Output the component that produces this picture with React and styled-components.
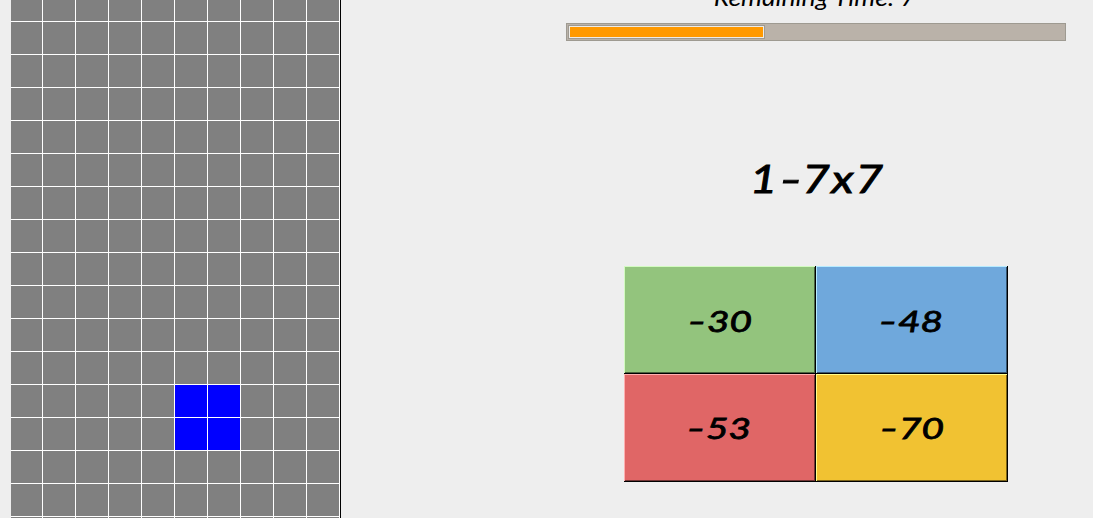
import React from 'react';
import styled, { createGlobalStyle } from 'styled-components';

const GlobalStyle = createGlobalStyle`
  * { box-sizing: border-box; }
  body {
    margin: 0;
    background: #eeeeee;
    color: #000;
    font-family: 'Ink Free', Lato, 'Open Sans', sans-serif;
    overflow: hidden;
  }
`;

const Game = styled.main`
  display: flex;
  width: 1093px;
  height: 518px;
  overflow: hidden;
`;

const Board = styled.section`
  display: grid;
  flex: none;
  margin-left: 11px;
  width: 330px;
  height: 518px;
  grid-template-columns: 32px repeat(9, 33px);
  grid-template-rows: 22px;
  grid-auto-rows: 33px;
  border-right: 1px solid #000;
  overflow: hidden;
`;

const Cell = styled.div`
  background: ${({ $filled }) => ($filled ? '#0000ff' : '#808080')};
  border-right: 1px solid #fff;
  border-bottom: 1px solid #fff;
`;

const Quiz = styled.section`
  display: flex;
  flex-direction: column;
  align-items: center;
  flex: none;
  width: 500px;
  margin-left: 225px;
`;

const Handwriting = styled.span`
  display: inline-block;
  font-style: italic;
  font-weight: 400;
  font-size: ${({ $size }) => $size}px;
  line-height: 1;
  letter-spacing: ${({ $spacing }) => $spacing || 0}px;
  white-space: pre;
  -webkit-text-stroke: ${({ $ink }) => $ink || 0}px #000;
  transform: translate(${({ $x }) => $x || 0}px, ${({ $y }) => $y || 0}px)
    scaleX(${({ $stretch }) => $stretch || 1});
`;

const Dash = styled.span`
  display: inline-block;
  margin: 0 ${({ $after }) => $after}em 0 ${({ $before }) => $before || 0}em;
  transform: scaleX(1.3);
`;

const TimerLabel = styled.div`
  display: flex;
  align-items: flex-end;
  justify-content: center;
  height: 23px;
  margin-top: -12px;
`;

const ProgressTrack = styled.div`
  width: 500px;
  height: 18px;
  margin-top: 12px;
  padding: 1px;
  background: #bab2a9;
  border: 1px solid #9e9a91;
`;

const ProgressBar = styled.div`
  width: 197px;
  height: 14px;
  background: #ff9900;
  border: 1px solid #9e9a91;
  box-shadow: inset 0 0 0 1px #eeebe7;
`;

const Question = styled.div`
  display: flex;
  align-items: center;
  justify-content: center;
  height: 225px;
  padding-top: 50px;
`;

const Answers = styled.div`
  display: grid;
  grid-template-columns: repeat(2, 192px);
  grid-auto-rows: 108px;
`;

const Answer = styled.button`
  display: flex;
  align-items: center;
  justify-content: center;
  padding: 0;
  border: 0;
  color: #000;
  font-family: inherit;
  background: ${({ $face }) => $face};
  box-shadow:
    inset -1px -1px #000,
    inset 1px 1px ${({ $light }) => $light},
    inset -2px -2px ${({ $shade }) => $shade};
`;

const COLUMNS = 10;
const ROWS = 17;
const isFilled = (row, column) =>
  (row === 12 || row === 13) && (column === 5 || column === 6);

const answers = [
  { value: '30', face: '#93c47d', light: '#d3fbc1', shade: '#4b643f', x: 1, y: 0 },
  { value: '48', face: '#6fa8dc', light: '#b6ebff', shade: '#385670', x: 0, y: 0 },
  { value: '53', face: '#e06666', light: '#ffb0b0', shade: '#723434', x: 0, y: -1 },
  { value: '70', face: '#f1c232', light: '#ffff8c', shade: '#7b6319', x: 1, y: -1 },
];

export default function App() {
  return (
    <Game>
      <GlobalStyle />
      <Board>
        {Array.from({ length: COLUMNS * ROWS }, (_, i) => (
          <Cell key={i} $filled={isFilled(Math.floor(i / COLUMNS), i % COLUMNS)} />
        ))}
      </Board>
      <Quiz>
        <TimerLabel>
          <Handwriting $size={23} $stretch={1.15} $x={-1} $y={-2}>Remaining Time: 7</Handwriting>
        </TimerLabel>
        <ProgressTrack>
          <ProgressBar />
        </ProgressTrack>
        <Question>
          <Handwriting $size={39} $ink={0.9} $stretch={1.22} $spacing={1.4} $x={1}>
            1<Dash $before={0.08} $after={0.02}>-</Dash>7x7
          </Handwriting>
        </Question>
        <Answers>
          {answers.map(({ value, face, light, shade, x, y }) => (
            <Answer key={value} $face={face} $light={light} $shade={shade}>
              <Handwriting $size={29} $ink={0.8} $stretch={1.34} $x={x} $y={y}>
                <Dash $after={0.08}>-</Dash>{value}
              </Handwriting>
            </Answer>
          ))}
        </Answers>
      </Quiz>
    </Game>
  );
}
